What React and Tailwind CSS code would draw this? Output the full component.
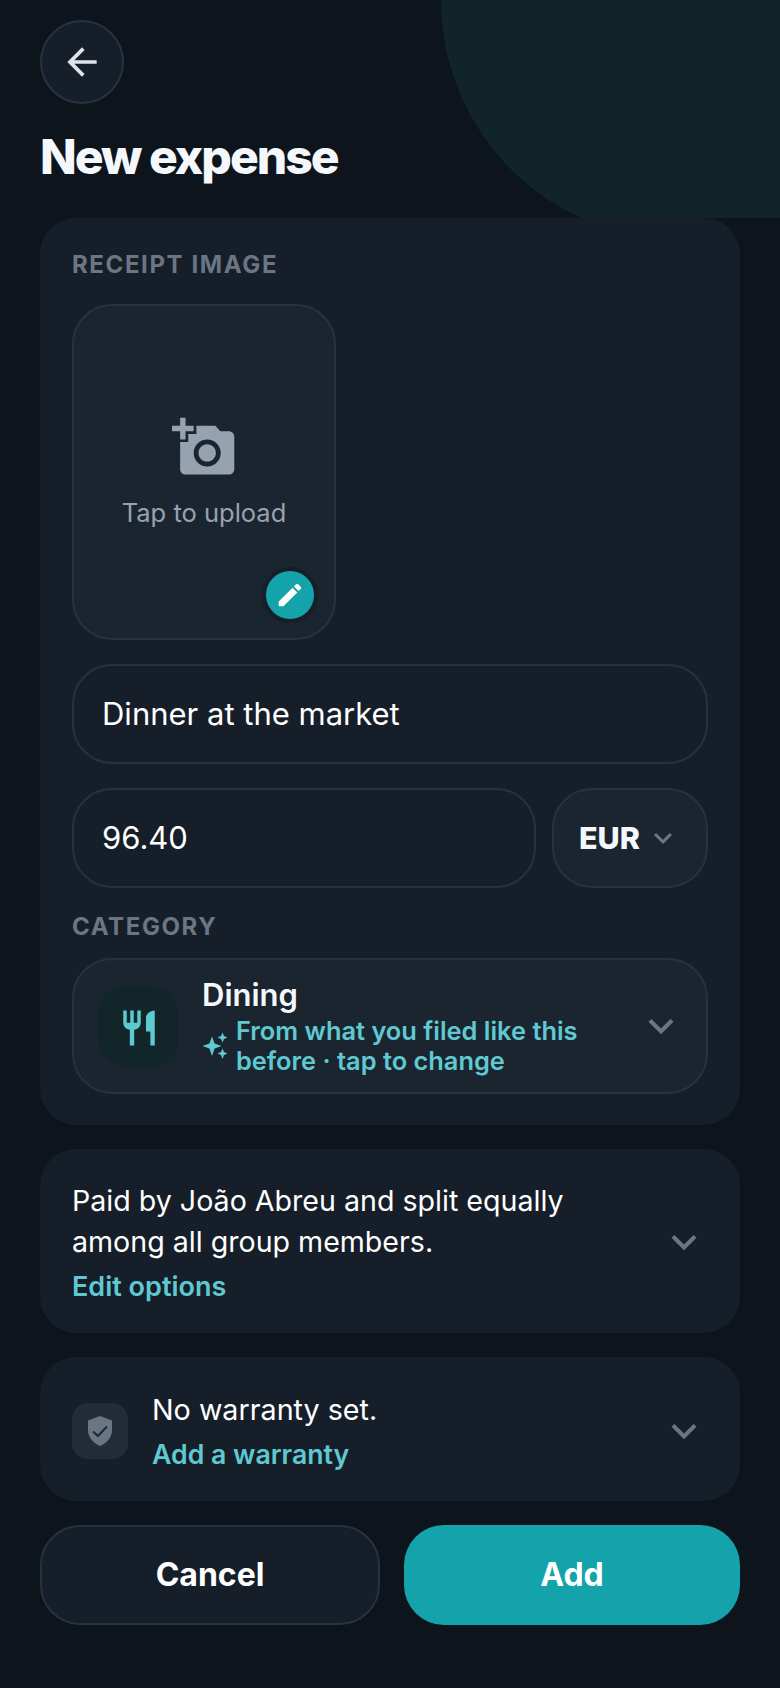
import { MdAddAPhoto, MdArrowBack, MdEdit, MdExpandMore, MdRestaurant } from 'react-icons/md';

function Sparkles() {
  return (
    <svg width="26" height="28" viewBox="0 0 26 28" fill="#5fc9d1" className="shrink-0">
      <path d="M10 4.5 L12.6 11.4 L19.5 14 L12.6 16.6 L10 24 L7.4 16.6 L0.5 14 L7.4 11.4 Z" />
      <path d="M20.5 0.5 L22 4 L25.5 5.5 L22 7 L20.5 10.5 L19 7 L15.5 5.5 L19 4 Z" />
      <path d="M20.5 16.5 L22 20 L25.5 21.5 L22 23 L20.5 27 L19 23 L15.5 21.5 L19 20 Z" />
    </svg>
  );
}

function ShieldCheck() {
  return (
    <svg width="24" height="30" viewBox="0 0 24 30">
      <path d="M12 0 L24 4.5 V14 C24 22 18 27.5 12 30 C6 27.5 0 22 0 14 V4.5 Z" fill="#6b7684" />
      <path d="M5 15.5 L10 20 L19 10.5" fill="none" stroke="#232c39" strokeWidth="2.2" />
    </svg>
  );
}

function Chevron() {
  return <MdExpandMore className="shrink-0 text-[#6b7684]" size={50} />;
}

function Label({ children }) {
  return <div className="text-[24px] leading-[28px] font-bold tracking-[1.6px] text-[#6b7684]">{children}</div>;
}

export default function App() {
  return (
    <div className="min-h-[1688px] bg-[#0d141b] font-['Inter',sans-serif] text-white">
      <header className="relative h-[218px] overflow-hidden px-10 pt-5">
        <div className="absolute top-[-240px] left-[441px] h-[480px] w-[480px] rounded-full bg-[#11242a]" />
        <button className="relative flex h-[84px] w-[84px] items-center justify-center rounded-full border-2 border-[#273240] bg-[#161e29]">
          <MdArrowBack className="text-[#dfe2e7]" size={44} />
        </button>
        <h1 className="relative mt-[24px] text-[48px] leading-[58px] font-extrabold tracking-[-2px] text-[#f4f7fb]">New expense</h1>
      </header>

      <main className="flex flex-col px-10">
        <section className="flex h-[907px] flex-col rounded-[36px] bg-[#161e29] px-8 pt-[33px]">
          <Label>RECEIPT IMAGE</Label>
          <div className="relative mt-[25px] flex h-[336px] w-[264px] flex-col items-center justify-center rounded-[40px] border-2 border-[#273240] bg-[#1b2530]">
            <MdAddAPhoto className="text-[#97a2b0]" size={65} />
            <span className="mt-[16px] text-[25.5px] leading-[34px] text-[#97a2b0]">Tap to upload</span>
            <div className="absolute right-[16px] bottom-[15px] box-content flex h-[48px] w-[48px] items-center justify-center rounded-full border-[4px] border-[#161e29] bg-[#14a3aa]">
              <MdEdit className="text-white" size={30} />
            </div>
          </div>
          <div className="mt-6 flex h-[100px] items-center rounded-[40px] border-2 border-[#273240] bg-[#161e29] px-[28px] text-[31px]">Dinner at the market</div>
          <div className="mt-6 flex gap-4">
            <div className="flex h-[100px] flex-1 items-center rounded-[40px] border-2 border-[#273240] bg-[#161e29] px-[28px] text-[31px]">96.40</div>
            <div className="flex h-[100px] w-[156px] items-center justify-center gap-[5px] rounded-[40px] border-2 border-[#273240] bg-[#1b2530] text-[30.5px] font-extrabold text-[#f4f7fb]">
              EUR
              <MdExpandMore className="text-[#6b7684]" size={36} />
            </div>
          </div>
          <div className="mt-[25px]"><Label>CATEGORY</Label></div>
          <div className="mt-[17px] flex h-[136px] items-center rounded-[40px] border-2 border-[#273240] bg-[#1b2530] pr-[22px] pl-[24px]">
            <div className="flex h-[80px] w-[80px] shrink-0 items-center justify-center rounded-[26px] bg-[#122529] pt-[3px] pl-[1px]">
              <MdRestaurant className="text-[#5fc9d1]" size={42} />
            </div>
            <div className="ml-[24px] flex-1">
              <div className="mt-[-2px] text-[31px] leading-[42px] font-semibold text-[#f4f7fb]">Dining</div>
              <div className="flex items-center gap-[8px] text-[25.4px] leading-[30px] font-semibold text-[#5fc9d1]">
                <Sparkles />
                <span className="w-[400px]">From what you filed like this before · tap to change</span>
              </div>
            </div>
            <Chevron />
          </div>
        </section>

        <section className="mt-6 flex h-[184px] items-center justify-between rounded-[36px] bg-[#161e29] pt-[2px] pr-[31px] pl-8">
          <div>
            <p className="w-[510px] text-[28.6px] leading-[41px]">Paid by João Abreu and split equally among all group members.</p>
            <div className="mt-[8px] text-[27px] leading-[34px] font-semibold text-[#5fc9d1]">Edit options</div>
          </div>
          <Chevron />
        </section>

        <section className="mt-6 flex h-[144px] items-center rounded-[36px] bg-[#161e29] pt-[3px] pr-[31px] pl-8">
          <div className="flex h-[56px] w-[56px] shrink-0 items-center justify-center rounded-[16px] bg-[#232c39]">
            <ShieldCheck />
          </div>
          <div className="ml-6 flex-1">
            <div className="text-[28.7px] leading-[40px]">No warranty set.</div>
            <div className="mt-[7px] text-[26.7px] leading-[34px] font-semibold text-[#5fc9d1]">Add a warranty</div>
          </div>
          <Chevron />
        </section>

        <div className="mt-6 flex gap-6">
          <button className="h-[100px] w-[340px] rounded-[40px] border-2 border-[#273240] bg-[#161e29] text-[32px] font-bold">Cancel</button>
          <button className="h-[100px] flex-1 rounded-[40px] bg-[#14a3aa] text-[32px] font-bold">Add</button>
        </div>
      </main>
    </div>
  );
}
